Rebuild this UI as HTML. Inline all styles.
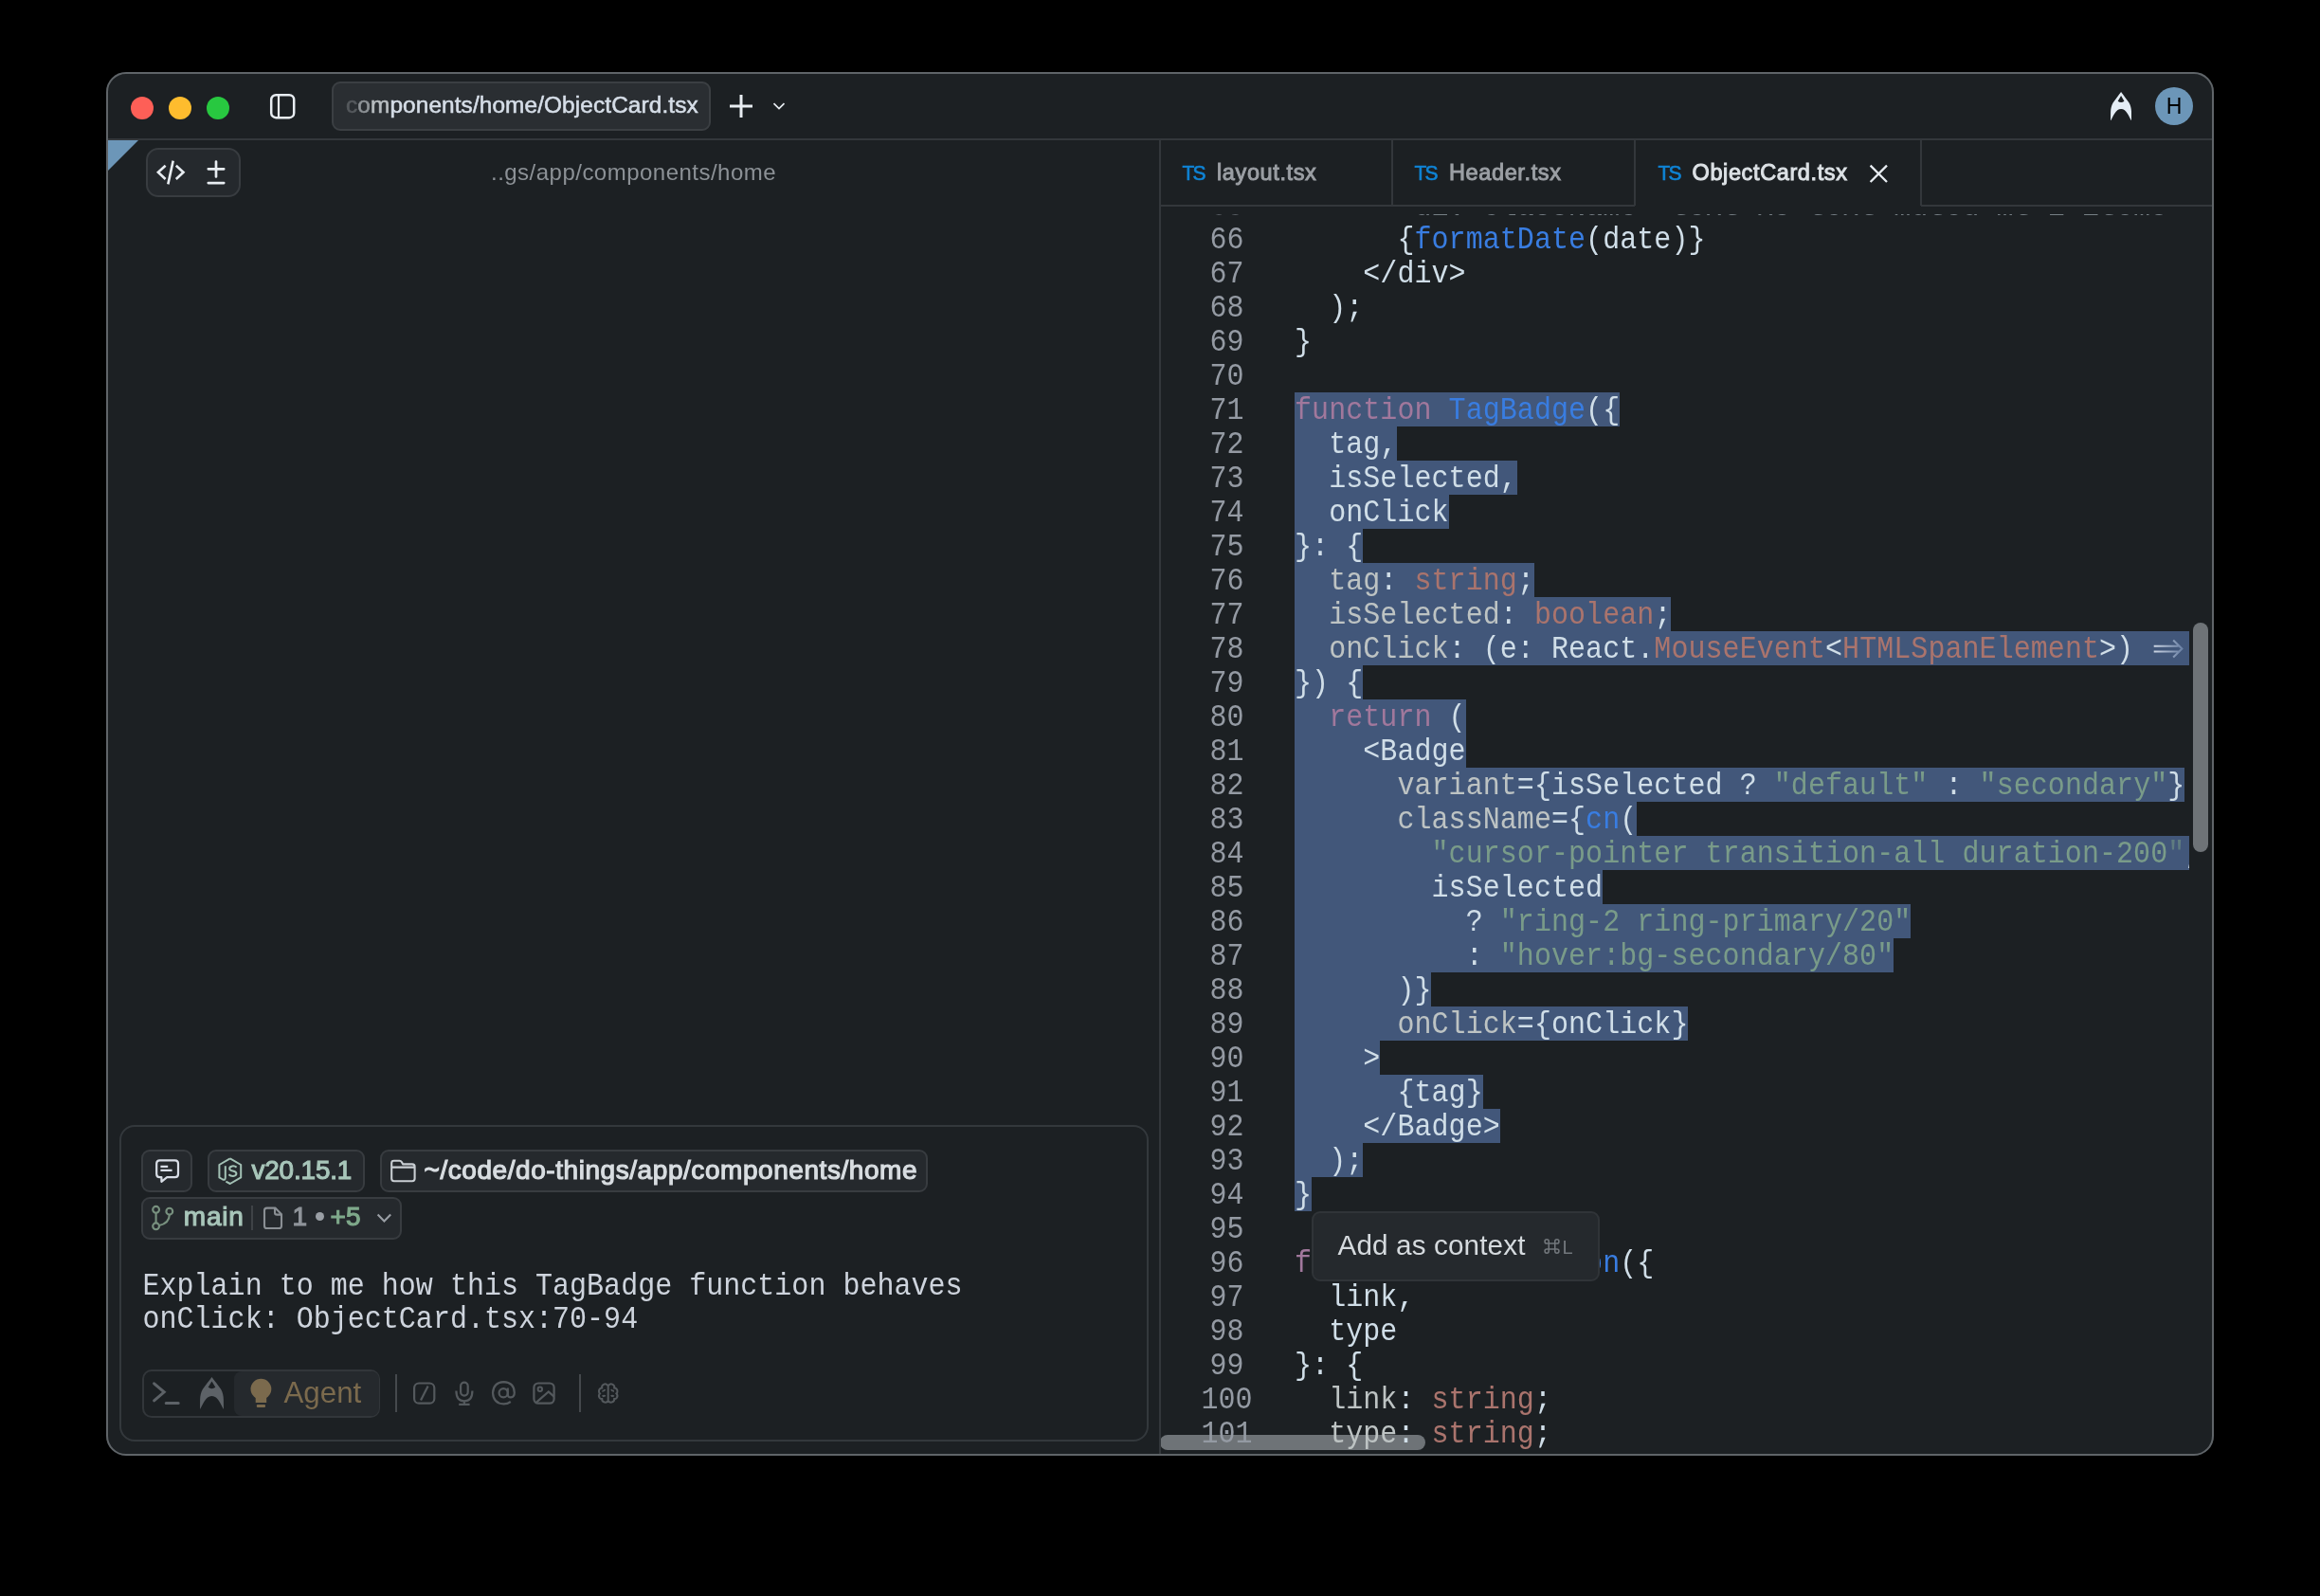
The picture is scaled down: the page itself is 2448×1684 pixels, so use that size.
<!DOCTYPE html>
<html>
<head>
<meta charset="utf-8">
<title>ObjectCard.tsx</title>
<style>
html,body{margin:0;padding:0;background:#000;}
body{width:2448px;height:1684px;position:relative;overflow:hidden;font-family:"Liberation Sans",sans-serif;color:#d0dee8;}
.abs{position:absolute;}
#winbg{position:absolute;left:112px;top:76px;width:2224px;height:1460px;border-radius:21px;background:#1c2023;}
#clip{position:absolute;left:0;top:0;width:2448px;height:1684px;clip-path:inset(76px 112px 148px 112px round 21px);will-change:transform;}
#border{position:absolute;left:112px;top:76px;width:2224px;height:1460px;box-sizing:border-box;border:2px solid #5f6468;border-radius:21px;}
.hl{position:absolute;background:#33373b;}
.dot{position:absolute;width:24px;height:24px;border-radius:50%;top:102px;}
.sans{font-family:"Liberation Sans",sans-serif;white-space:pre;position:absolute;}
.mono{font-family:"Liberation Mono",monospace;white-space:pre;}
/* editor */
#ed{position:absolute;left:1225px;top:226px;width:1085px;height:1308px;overflow:hidden;}
#edin{position:absolute;left:-1225px;top:-226px;width:2448px;height:1684px;}
.sel{position:absolute;left:1366px;height:36px;background:#42577a;}
.cl{position:absolute;left:1366px;height:36px;line-height:36px;font-family:"Liberation Mono",monospace;font-size:30px;letter-spacing:0.06px;white-space:pre;color:#d0dee8;padding-top:2px;box-sizing:border-box;transform:scaleY(1.09);transform-origin:0 28px;}
.ln{position:absolute;left:1244.5px;width:100px;text-align:center;height:36px;line-height:36px;font-family:"Liberation Mono",monospace;font-size:30px;letter-spacing:0.06px;color:#949aa3;padding-top:2px;box-sizing:border-box;transform:scaleY(1.09);transform-origin:0 28px;}
.pl{font-size:30px;line-height:36px;height:36px;letter-spacing:0.02px;color:#ced4dd;transform:scaleY(1.09);transform-origin:0 27px;}
.p{color:#bdc3c3}.k{color:#a1789c}.f{color:#397de1}.t{color:#aa746d}.s{color:#799b89}.sf{color:#5f7c80}
.arr{display:inline-block;width:36.12px;height:34px;vertical-align:top;position:relative;}
.arr svg{position:absolute;left:0;top:0;}
.tsi{top:169px;font-size:21px;line-height:28px;letter-spacing:-1.6px;-webkit-text-stroke:0.6px #0f84d6;color:#0f84d6;margin-left:0.4px;transform:scaleY(1.07);transform-origin:0 21px;}
.tabt{top:165.5px;font-size:23.5px;line-height:32px;letter-spacing:0.62px;-webkit-text-stroke:0.95px currentColor;}
.chip{position:absolute;box-sizing:border-box;background:#25292d;border:2px solid #383c40;border-radius:9px;}
</style>
</head>
<body>
<div id="winbg"></div>
<div id="clip">
  <!-- title bar -->
  <div class="dot" style="left:138px;background:#fe5f57"></div>
  <div class="dot" style="left:178px;background:#febc2e"></div>
  <div class="dot" style="left:218px;background:#28c840"></div>
  <svg class="abs" style="left:282px;top:96px" width="32" height="32" viewBox="0 0 32 32"><rect x="4.2" y="4.2" width="24" height="24" rx="5" fill="none" stroke="#e8edf2" stroke-width="2.5"/><path d="M12 4.2V28.2" stroke="#e8edf2" stroke-width="2.2"/></svg>
  <div class="chip" style="left:350px;top:86px;width:400px;height:52px;border-radius:9px;background:#2a2e32;border:2px solid #3b3f43;"></div>
  <div class="sans" id="tabtitle" style="left:365px;top:96.2px;font-size:24.4px;line-height:30px;color:#d6dee8;letter-spacing:0.1px;-webkit-text-stroke:0.55px #d6dee8;"><span style="color:#55595d;-webkit-text-stroke-color:#55595d">c</span><span style="color:#8e9397;-webkit-text-stroke-color:#8e9397">o</span><span style="color:#b9bec2;-webkit-text-stroke-color:#b9bec2">m</span>ponents/home/ObjectCard.tsx</div>
  <svg class="abs" style="left:766px;top:96px" width="32" height="32" viewBox="0 0 32 32"><path d="M16 4V28M4 16H28" stroke="#e8edf2" stroke-width="3" fill="none"/></svg>
  <svg class="abs" style="left:812px;top:104px" width="20" height="16" viewBox="0 0 20 16"><path d="M4.5 5.2L10 10.6L15.5 5.2" stroke="#e8edf2" stroke-width="1.7" fill="none"/></svg>
  <!-- warp icon + avatar -->
  <svg class="abs" style="left:2226.95px;top:96.65px" width="22.15" height="30.55" viewBox="0 0 21.9 30.55" preserveAspectRatio="none"><path fill-rule="evenodd" fill="#e4edf5" d="M10.95 0C8.5 3.5 4.5 8.5 2.55 11.55C0.9 14.5 0.15 18 0.1 21.5L0 30.55C2.8 26.2 4.9 17.9 10.95 17.9C17 17.9 19.1 26.2 21.9 30.55L21.8 21.5C21.75 18 21 14.5 19.35 11.55C17.4 8.5 13.4 3.5 10.95 0ZM10.95 4L7.6 9.7Q10.95 12.1 14.3 9.7Z"/></svg>
  <div class="abs" style="left:2274px;top:92px;width:40px;height:40px;border-radius:50%;background:#6c96b8;"></div>
  <div class="sans" style="left:2274px;top:99px;width:40px;text-align:center;font-size:23px;line-height:26px;color:#000;">H</div>
  <div class="hl" style="left:112px;top:146px;width:2224px;height:2px;"></div>

  <!-- left pane -->
  <svg class="abs" style="left:114px;top:148px" width="34" height="34" viewBox="0 0 34 34"><path d="M0 0H32L0 32Z" fill="#6c96b8"/></svg>
  <div class="chip" style="left:154px;top:156px;width:100px;height:52px;border-radius:13px;"></div>
  <svg class="abs" style="left:160px;top:164px" width="40" height="36" viewBox="0 0 40 36"><path d="M14.6 10.8L6.9 17.8L14.6 25M25.8 10.8L33.5 17.8L25.8 25M22.7 5.6L17.3 30.4" stroke="#e8edf2" stroke-width="2.6" fill="none"/></svg>
  <svg class="abs" style="left:212px;top:164px" width="32" height="36" viewBox="0 0 32 36"><path d="M16 6.6V22.4M7.8 14.3H24.2M7.8 29.1H24.2" stroke="#e8edf2" stroke-width="2.7" stroke-linecap="round" fill="none"/></svg>
  <div class="sans" id="panepath" style="left:518px;top:167px;font-size:24px;line-height:30px;letter-spacing:0.48px;color:#8c9196;">..gs/app/components/home</div>

  <!-- input box -->
  <div class="abs" style="left:126px;top:1187px;width:1086px;height:334px;box-sizing:border-box;border:2px solid #33383c;border-radius:16px;"></div>
  <div class="mono abs pl" style="left:150.5px;top:1339.5px;">Explain to me how this TagBadge function behaves</div>
  <div class="mono abs pl" style="left:150.5px;top:1374.5px;">onClick: ObjectCard.tsx:70-94</div>


  <!-- chips row 1 -->
  <div class="chip" style="left:149px;top:1213px;width:54px;height:45px;"></div>
  <svg class="abs" style="left:160px;top:1218px" width="34" height="34" viewBox="0 0 34 34"><path d="M8.6 6.4H24.6Q28 6.4 28 9.8V20.8Q28 24.2 24.6 24.2H16.2L10.4 28.8V24.2H8.6Q5.2 24.2 5.2 20.8V9.8Q5.2 6.4 8.6 6.4Z" fill="none" stroke="#d9dee7" stroke-width="2.2" stroke-linejoin="round"/><path d="M9.4 12.8H17.2M9.4 16.8H21.6" stroke="#d9dee7" stroke-width="2.2" fill="none"/></svg>
  <div class="chip" style="left:219px;top:1213px;width:166px;height:45px;"></div>
  <svg class="abs" style="left:226px;top:1218px" width="34" height="36" viewBox="0 0 34 36"><path d="M16.8 4.4L28.2 11V24.4L16.8 31L12.4 28.6M16.8 4.4L5.4 11V24.4L9 26.5Q11.8 27.6 11.8 24.6V12.2" fill="none" stroke="#a3c1b5" stroke-width="2" stroke-linejoin="round"/><path d="M23.6 13.6Q21.6 12 19 12.4Q16 13 16.2 15.2Q16.4 17 19.6 17.6Q23.2 18.2 23.4 20.2Q23.4 22.6 20 22.9Q17.2 23 15.4 21.2" fill="none" stroke="#a3c1b5" stroke-width="2"/></svg>
  <div class="sans" id="nodev" style="left:265.5px;top:1218px;font-size:27.8px;line-height:34px;letter-spacing:-0.12px;-webkit-text-stroke:1.1px #a8c6ba;color:#a8c6ba;">v20.15.1</div>
  <div class="chip" style="left:401px;top:1213px;width:578px;height:45px;"></div>
  <svg class="abs" style="left:408px;top:1218px" width="36" height="34" viewBox="0 0 36 34"><path d="M5.2 9.2Q5.2 6.8 7.6 6.8H13.6Q15 6.8 15.8 8L17.2 10.4H27Q29.6 10.4 29.6 13V25.6Q29.6 28.2 27 28.2H7.8Q5.2 28.2 5.2 25.6Z M5.2 13.6H29.6" fill="none" stroke="#c9ced3" stroke-width="2.1" stroke-linejoin="round"/></svg>
  <div class="sans" id="cwd" style="left:447.5px;top:1218px;font-size:28px;line-height:34px;letter-spacing:0.56px;-webkit-text-stroke:1.15px #d8dde1;color:#d8dde1;">~/code/do-things/app/components/home</div>
  <!-- chips row 2 -->
  <div class="chip" style="left:149px;top:1262.5px;width:275px;height:45px;"></div>
  <svg class="abs" style="left:154px;top:1266px" width="36" height="38" viewBox="0 0 36 38"><circle cx="10.6" cy="10.3" r="3.4" fill="none" stroke="#78917f" stroke-width="2.1"/><circle cx="24.8" cy="12.2" r="3.4" fill="none" stroke="#78917f" stroke-width="2.1"/><circle cx="10.6" cy="27.8" r="3.4" fill="none" stroke="#78917f" stroke-width="2.1"/><path d="M10.6 13.8V24.3M24.8 15.7Q24.6 24.6 14 27" fill="none" stroke="#78917f" stroke-width="2.1"/></svg>
  <div class="sans" id="branch" style="left:193.8px;top:1266.5px;font-size:28px;line-height:34px;letter-spacing:0.8px;-webkit-text-stroke:1.1px #a8c6ba;color:#a8c6ba;">main</div>
  <div class="abs" style="left:265px;top:1272px;width:2px;height:26px;background:#3f4347;"></div>
  <svg class="abs" style="left:272px;top:1268px" width="32" height="34" viewBox="0 0 32 34"><path d="M9.6 6.6H18.4L25 13.2V25.4Q25 28 22.4 28H9.6Q7 28 7 25.4V9.2Q7 6.6 9.6 6.6ZM18 7V11.4Q18 13.6 20.2 13.6H24.6" fill="none" stroke="#8a8f94" stroke-width="2.1" stroke-linejoin="round"/></svg>
  <div class="sans" style="left:308.5px;top:1266.5px;font-size:28px;line-height:34px;-webkit-text-stroke:1.1px #8f949a;color:#8f949a;">1</div>
  <div class="abs" style="left:332.6px;top:1278.8px;width:9.2px;height:9.2px;border-radius:50%;background:#9a9fa5;"></div>
  <div class="sans" style="left:348.6px;top:1266.5px;font-size:28px;line-height:34px;-webkit-text-stroke:1.1px #7fa98b;color:#7fa98b;">+5</div>
  <svg class="abs" style="left:394px;top:1274px" width="24" height="22" viewBox="0 0 24 22"><path d="M4.6 7.6L11.4 14.4L18.2 7.6" fill="none" stroke="#9a9fa5" stroke-width="2.1"/></svg>

  <!-- bottom toolbar -->
  <div class="abs" style="left:149.5px;top:1444.5px;width:251px;height:51px;box-sizing:border-box;border:2px solid #32363a;border-radius:10px;"></div>
  <div class="abs" style="left:247px;top:1446.5px;width:152.5px;height:47px;background:#25292d;border-radius:8px;"></div>
  <svg class="abs" style="left:154px;top:1450px" width="44" height="40" viewBox="0 0 44 40"><path d="M8.6 9.8L19.2 18.8L8.6 27.8M21.2 30.4H34.2" fill="none" stroke="#5d6267" stroke-width="3" stroke-linecap="round"/></svg>
  <svg class="abs" style="left:211px;top:1453px" width="25" height="34" viewBox="0 0 21.9 30.55" preserveAspectRatio="none"><path fill-rule="evenodd" fill="#5d6267" d="M10.95 0C8.5 3.5 4.5 8.5 2.55 11.55C0.9 14.5 0.15 18 0.1 21.5L0 30.55C2.8 26.2 4.9 17.9 10.95 17.9C17 17.9 19.1 26.2 21.9 30.55L21.8 21.5C21.75 18 21 14.5 19.35 11.55C17.4 8.5 13.4 3.5 10.95 0ZM10.95 4L7.6 9.7Q10.95 12.1 14.3 9.7Z"/></svg>
  <svg class="abs" style="left:260px;top:1450px" width="32" height="40" viewBox="0 0 32 40"><circle cx="15.4" cy="15.6" r="10.9" fill="#7b6a4d"/><rect x="9.7" y="22" width="11.5" height="8" fill="#7b6a4d"/><rect x="10.8" y="31.9" width="9.2" height="3" rx="1" fill="#7b6a4d"/></svg>
  <div class="sans" id="agent" style="left:299.5px;top:1452px;font-size:31.3px;line-height:36px;color:#7b6a4d;">Agent</div>
  <div class="abs" style="left:417px;top:1450px;width:2px;height:40px;background:#45494d;"></div>
  <svg class="abs" style="left:432px;top:1454px" width="32" height="32" viewBox="0 0 32 32"><rect x="5.1" y="5.5" width="21.2" height="21.2" rx="5" fill="none" stroke="#54595d" stroke-width="2.2"/><path d="M19.6 8.6L12 23.4" stroke="#54595d" stroke-width="2.2" fill="none"/></svg>
  <svg class="abs" style="left:474px;top:1452px" width="32" height="36" viewBox="0 0 32 36"><rect x="12.1" y="6.6" width="7.6" height="14" rx="3.8" fill="none" stroke="#54595d" stroke-width="2.2"/><path d="M7.4 15.6Q7.4 26.4 15.9 26.4Q24.4 26.4 24.4 15.6M15.9 26.4V29.8M10.2 29.9H21.6" fill="none" stroke="#54595d" stroke-width="2.2"/></svg>
  <svg class="abs" style="left:514px;top:1452px" width="36" height="36" viewBox="0 0 36 36"><circle cx="17.2" cy="17.8" r="4.6" fill="none" stroke="#54595d" stroke-width="2.2"/><path d="M21.8 12.6V19.4Q22 22.6 25 22.4Q28.8 22 28.8 17.4Q28.4 6.6 17.5 6.2Q6.6 6.6 6 17.8Q6.6 29 17.5 29.4Q21.6 29.4 24.8 27" fill="none" stroke="#54595d" stroke-width="2.2"/></svg>
  <svg class="abs" style="left:558px;top:1454px" width="32" height="32" viewBox="0 0 32 32"><rect x="5.4" y="5.5" width="21.2" height="21.2" rx="4.6" fill="none" stroke="#54595d" stroke-width="2.2"/><circle cx="11.8" cy="11.8" r="2.2" fill="none" stroke="#54595d" stroke-width="2"/><path d="M8 25.6L20.8 14.4L26.6 19.6" fill="none" stroke="#54595d" stroke-width="2.2"/></svg>
  <div class="abs" style="left:611px;top:1450px;width:2px;height:40px;background:#45494d;"></div>
  <svg class="abs" style="left:626px;top:1454px" width="32" height="32" viewBox="0 0 32 32"><path d="M15.7 7.6V25.2M15.7 8.4Q14 5.2 10.8 6.8Q8.6 8 9.2 10.4Q5.6 11 6 14.4Q6 15.6 7 16.4Q5 18.4 6.6 20.8Q7.6 22 9.2 22Q9 25 12 25.6Q14.6 26 15.7 24M15.7 8.4Q17.4 5.2 20.6 6.8Q22.8 8 22.2 10.4Q25.8 11 25.4 14.4Q25.4 15.6 24.4 16.4Q26.4 18.4 24.8 20.8Q23.8 22 22.2 22Q22.4 25 19.4 25.6Q16.8 26 15.7 24M9.4 13.8Q11.6 14 12.4 12M22 13.8Q19.8 14 19 12M9.6 19.4Q11.2 18.2 12.8 19.2M21.8 19.4Q20.2 18.2 18.6 19.2" fill="none" stroke="#54595d" stroke-width="2"/></svg>

  <!-- pane divider -->
  <div class="hl" style="left:1223px;top:148px;width:2px;height:1390px;"></div>

  <!-- editor tabs -->
  <div class="hl" style="left:1225px;top:216px;width:500px;height:2px;"></div>
  <div class="hl" style="left:2027px;top:216px;width:310px;height:2px;"></div>
  <div class="hl" style="left:1468px;top:148px;width:2px;height:69px;"></div>
  <div class="hl" style="left:1724px;top:148px;width:2px;height:69px;"></div>
  <div class="hl" style="left:2026px;top:148px;width:2px;height:69px;"></div>


  <div class="sans tsi" style="left:1247px;">TS</div>
  <div class="sans tabt" style="left:1284px;color:#9b9fa4;">layout.tsx</div>
  <div class="sans tsi" style="left:1492px;">TS</div>
  <div class="sans tabt" style="left:1529px;color:#9b9fa4;">Header.tsx</div>
  <div class="sans tsi" style="left:1749px;">TS</div>
  <div class="sans tabt" style="left:1785.5px;color:#dde2e6;">ObjectCard.tsx</div>
  <svg class="abs" style="left:1970px;top:171px" width="24" height="24" viewBox="0 0 24 24"><path d="M3.6 3.6L21 21M21 3.6L3.6 21" stroke="#e8edf2" stroke-width="2.3" fill="none"/></svg>

  <!-- editor -->
  <div id="ed"><div id="edin">
<div class="abs" style="left:1224px;top:1514px;width:280px;height:16px;border-radius:8px;background:#6e7377;"></div>
<div class="ln" style="top:198.55px;opacity:0.5">65</div>
<div class="cl" style="top:198.55px;opacity:0.5"><span class="d">      &lt;div className="text-xs text-muted mt-1 items-center flex"&gt;</span></div>
<div class="ln" style="top:234px">66</div>
<div class="cl" style="top:234px"><span class="d">      {</span><span class="f">formatDate</span><span class="d">(date)}</span></div>
<div class="ln" style="top:270px">67</div>
<div class="cl" style="top:270px"><span class="d">    &lt;/div&gt;</span></div>
<div class="ln" style="top:306px">68</div>
<div class="cl" style="top:306px"><span class="d">  );</span></div>
<div class="ln" style="top:342px">69</div>
<div class="cl" style="top:342px"><span class="d">}</span></div>
<div class="ln" style="top:378px">70</div>
<div class="cl" style="top:378px"></div>
<div class="sel" style="top:414px;width:343.14px"></div>
<div class="ln" style="top:414px">71</div>
<div class="cl" style="top:414px"><span class="k">function</span><span class="d"> </span><span class="f">TagBadge</span><span class="d">({</span></div>
<div class="sel" style="top:450px;width:108.36px"></div>
<div class="ln" style="top:450px">72</div>
<div class="cl" style="top:450px"><span class="d">  tag,</span></div>
<div class="sel" style="top:486px;width:234.78px"></div>
<div class="ln" style="top:486px">73</div>
<div class="cl" style="top:486px"><span class="d">  isSelected,</span></div>
<div class="sel" style="top:522px;width:162.54px"></div>
<div class="ln" style="top:522px">74</div>
<div class="cl" style="top:522px"><span class="d">  onClick</span></div>
<div class="sel" style="top:558px;width:72.24px"></div>
<div class="ln" style="top:558px">75</div>
<div class="cl" style="top:558px"><span class="d">}: {</span></div>
<div class="sel" style="top:594px;width:252.84px"></div>
<div class="ln" style="top:594px">76</div>
<div class="cl" style="top:594px"><span class="d">  </span><span class="p">tag</span><span class="d">: </span><span class="t">string</span><span class="d">;</span></div>
<div class="sel" style="top:630px;width:397.32px"></div>
<div class="ln" style="top:630px">77</div>
<div class="cl" style="top:630px"><span class="d">  </span><span class="p">isSelected</span><span class="d">: </span><span class="t">boolean</span><span class="d">;</span></div>
<div class="sel" style="top:666px;width:1047.48px"></div>
<div class="ln" style="top:666px">78</div>
<div class="cl" style="top:666px"><span class="d">  </span><span class="p">onClick</span><span class="d">: (e: React.</span><span class="t">MouseEvent</span><span class="d">&lt;</span><span class="t">HTMLSpanElement</span><span class="d">&gt;) </span><span class="d">  </span><span class="d"> void;</span></div>
<div class="sel" style="top:702px;width:72.24px"></div>
<div class="ln" style="top:702px">79</div>
<div class="cl" style="top:702px"><span class="d">}) {</span></div>
<div class="sel" style="top:738px;width:180.60px"></div>
<div class="ln" style="top:738px">80</div>
<div class="cl" style="top:738px"><span class="d">  </span><span class="k">return</span><span class="d"> (</span></div>
<div class="sel" style="top:774px;width:180.60px"></div>
<div class="ln" style="top:774px">81</div>
<div class="cl" style="top:774px"><span class="d">    &lt;Badge</span></div>
<div class="sel" style="top:810px;width:939.12px"></div>
<div class="ln" style="top:810px">82</div>
<div class="cl" style="top:810px"><span class="d">      </span><span class="p">variant</span><span class="d">={isSelected ? </span><span class="s">"default"</span><span class="d"> : </span><span class="s">"secondary"</span><span class="d">}</span></div>
<div class="sel" style="top:846px;width:361.20px"></div>
<div class="ln" style="top:846px">83</div>
<div class="cl" style="top:846px"><span class="d">      </span><span class="p">className</span><span class="d">={</span><span class="f">cn</span><span class="d">(</span></div>
<div class="sel" style="top:882px;width:957.18px"></div>
<div class="ln" style="top:882px">84</div>
<div class="cl" style="top:882px"><span class="d">        </span><span class="s">"cursor-pointer transition-all duration-200</span><span class="sf">"</span><span class="d">,</span></div>
<div class="sel" style="top:918px;width:325.08px"></div>
<div class="ln" style="top:918px">85</div>
<div class="cl" style="top:918px"><span class="d">        isSelected</span></div>
<div class="sel" style="top:954px;width:650.16px"></div>
<div class="ln" style="top:954px">86</div>
<div class="cl" style="top:954px"><span class="d">          ? </span><span class="s">"ring-2 ring-primary/20"</span></div>
<div class="sel" style="top:990px;width:632.10px"></div>
<div class="ln" style="top:990px">87</div>
<div class="cl" style="top:990px"><span class="d">          : </span><span class="s">"hover:bg-secondary/80"</span></div>
<div class="sel" style="top:1026px;width:144.48px"></div>
<div class="ln" style="top:1026px">88</div>
<div class="cl" style="top:1026px"><span class="d">      )}</span></div>
<div class="sel" style="top:1062px;width:415.38px"></div>
<div class="ln" style="top:1062px">89</div>
<div class="cl" style="top:1062px"><span class="d">      </span><span class="p">onClick</span><span class="d">={onClick}</span></div>
<div class="sel" style="top:1098px;width:90.30px"></div>
<div class="ln" style="top:1098px">90</div>
<div class="cl" style="top:1098px"><span class="d">    &gt;</span></div>
<div class="sel" style="top:1134px;width:198.66px"></div>
<div class="ln" style="top:1134px">91</div>
<div class="cl" style="top:1134px"><span class="d">      {tag}</span></div>
<div class="sel" style="top:1170px;width:216.72px"></div>
<div class="ln" style="top:1170px">92</div>
<div class="cl" style="top:1170px"><span class="d">    &lt;/Badge&gt;</span></div>
<div class="sel" style="top:1206px;width:72.24px"></div>
<div class="ln" style="top:1206px">93</div>
<div class="cl" style="top:1206px"><span class="d">  );</span></div>
<div class="sel" style="top:1242px;width:18.06px"></div>
<div class="ln" style="top:1242px">94</div>
<div class="cl" style="top:1242px"><span class="d">}</span></div>
<div class="ln" style="top:1278px">95</div>
<div class="cl" style="top:1278px"></div>
<div class="ln" style="top:1314px">96</div>
<div class="cl" style="top:1314px"><span class="k">function</span><span class="d"> </span><span class="f">LinkButton</span><span class="d">({</span></div>
<div class="ln" style="top:1350px">97</div>
<div class="cl" style="top:1350px"><span class="d">  link,</span></div>
<div class="ln" style="top:1386px">98</div>
<div class="cl" style="top:1386px"><span class="d">  type</span></div>
<div class="ln" style="top:1422px">99</div>
<div class="cl" style="top:1422px"><span class="d">}: {</span></div>
<div class="ln" style="top:1458px">100</div>
<div class="cl" style="top:1458px"><span class="d">  </span><span class="p">link</span><span class="d">: </span><span class="t">string</span><span class="d">;</span></div>
<div class="ln" style="top:1494px">101</div>
<div class="cl" style="top:1494px"><span class="d">  </span><span class="p">type</span><span class="d">: </span><span class="t">string</span><span class="d">;</span></div>
<svg class="abs" style="left:2269.00px;top:666px" width="40" height="36" viewBox="0 0 40 36"><defs><linearGradient id="ag" x1="3" y1="0" x2="34" y2="0" gradientUnits="userSpaceOnUse"><stop offset="0" stop-color="#cfd8e5"/><stop offset="1" stop-color="#6a80a4"/></linearGradient></defs><path d="M3.7 15.7H29.6M3.7 21.5H29.6M24.2 9.6L33.4 18.5L24.2 27.4" fill="none" stroke="url(#ag)" stroke-width="2.1"/></svg>
  </div></div>

  <!-- scrollbars -->
  <div class="abs" style="left:2314px;top:657px;width:16px;height:242px;border-radius:8px;background:#6e7377;"></div>

  <!-- popup -->
  <div class="abs" style="left:1384px;top:1278px;width:304px;height:74px;box-sizing:border-box;background:#25292d;border:2px solid #303438;border-radius:9px;"></div>
  <div class="sans" id="popt" style="left:1411.5px;top:1296.5px;font-size:29.7px;line-height:34px;letter-spacing:0.12px;color:#d5dade;">Add as context</div>
  <svg class="abs" style="left:1629.2px;top:1307.3px" width="17" height="16" viewBox="0 0 16.5 16"><path d="M5 5H11.5V11H5ZM5 5H2.9A2.1 2.1 0 1 1 5 2.9ZM11.5 5V2.9A2.1 2.1 0 1 1 13.6 5ZM11.5 11H13.6A2.1 2.1 0 1 1 11.5 13.1ZM5 11V13.1A2.1 2.1 0 1 1 2.9 11Z" fill="none" stroke="#72777c" stroke-width="1.5"/></svg>
  <div class="sans" id="popk" style="left:1648.5px;top:1304px;font-size:20px;line-height:24px;color:#72777c;">L</div>
</div>
<div id="border"></div>
</body>
</html>
